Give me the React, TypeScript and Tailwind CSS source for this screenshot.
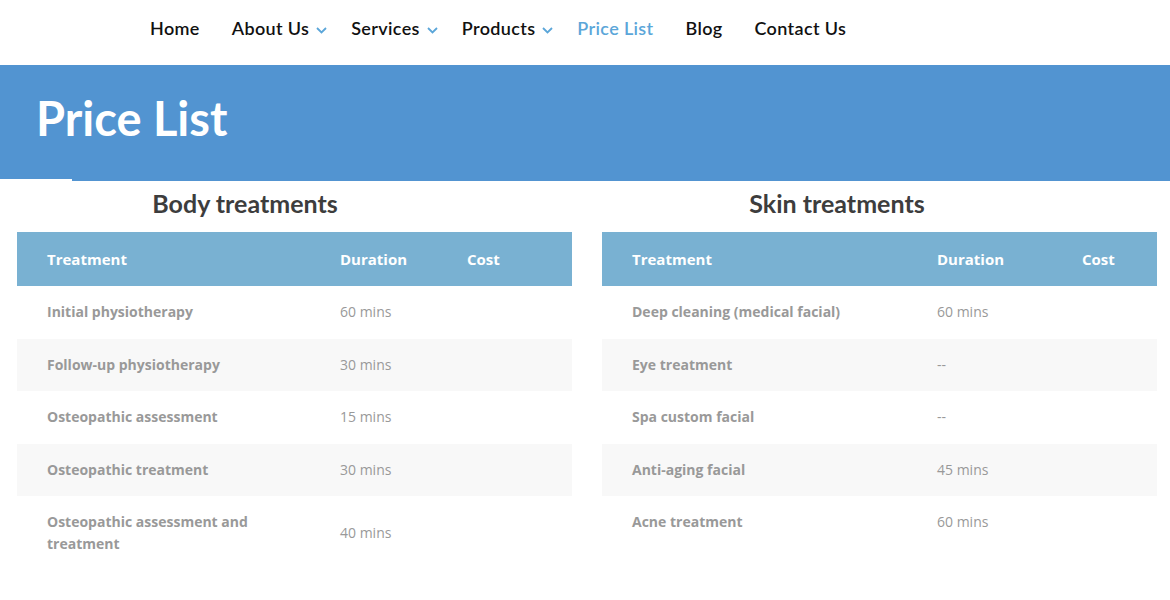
import React from "react";

type Row = { name: string; duration: string; cost?: string };

const bodyRows: Row[] = [
  { name: "Initial physiotherapy", duration: "60 mins" },
  { name: "Follow-up physiotherapy", duration: "30 mins" },
  { name: "Osteopathic assessment", duration: "15 mins" },
  { name: "Osteopathic treatment", duration: "30 mins" },
  { name: "Osteopathic assessment and treatment", duration: "40 mins" },
];

const skinRows: Row[] = [
  { name: "Deep cleaning (medical facial)", duration: "60 mins" },
  { name: "Eye treatment", duration: "--" },
  { name: "Spa custom facial", duration: "--" },
  { name: "Anti-aging facial", duration: "45 mins" },
  { name: "Acne treatment", duration: "60 mins" },
];

function Chevron() {
  return (
    <svg width="11" height="7" viewBox="0 0 11 7" className="ml-[7px] mt-[4px]">
      <path d="M1 1l4.5 4.5L10 1" fill="none" stroke="#5ba6d9" strokeWidth="1.8" />
    </svg>
  );
}

function NavItem({ label, active, drop, className }: { label: string; active?: boolean; drop?: boolean; className?: string }) {
  return (
    <a className={`flex items-center ${className ?? ""}`}>
      <span className={active ? "text-[#5ba6d9]" : "text-[#111]"}>{label}</span>
      {drop && <Chevron />}
    </a>
  );
}

function PriceTable({ title, rows, cols, titlePad }: { title: string; rows: Row[]; cols: string; titlePad: string }) {
  return (
    <div className="w-[555px]">
      {/* заголовок таблицы */}
      <h2 className={`h-[51px] flex items-center justify-center pb-[6px] ${titlePad} text-[25px] font-bold text-[#3d3d3d] font-['Lato',sans-serif]`}>
        {title}
      </h2>
      <div className={`grid ${cols} h-[54px] items-center bg-[#79b1d2] text-white text-[15px] font-bold`}>
        <div className="pl-[30px]">Treatment</div>
        <div className="pl-[30px]">Duration</div>
        <div className="pl-[30px]">Cost</div>
      </div>
      {rows.map((r, i) => (
        <div
          key={r.name}
          className={`grid ${cols} items-center text-[14px] leading-[22px] text-[#999] ${i % 2 === 1 ? "bg-[#f8f8f8]" : "bg-white"}`}
        >
          <div className="pl-[30px] pr-[20px] py-[15.25px] font-bold">{r.name}</div>
          <div className="pl-[30px]">{r.duration}</div>
          <div className="pl-[30px]">{r.cost ?? ""}</div>
        </div>
      ))}
    </div>
  );
}

export default function App() {
  return (
    <div className="min-h-screen bg-white font-['Open_Sans',sans-serif]">
      {/* Навигация */}
      <nav className="h-[65px] flex items-start pt-[15px] pl-[150px] text-[18px] tracking-[0.35px] font-semibold font-['Lato',sans-serif]">
        <NavItem label="Home" />
        <NavItem label="About Us" drop className="ml-[32px]" />
        <NavItem label="Services" drop className="ml-[24px]" />
        <NavItem label="Products" drop className="ml-[24px]" />
        <NavItem label="Price List" active className="ml-[24px]" />
        <NavItem label="Blog" className="ml-[32px]" />
        <NavItem label="Contact Us" className="ml-[32px]" />
      </nav>

      {/* Баннер */}
      <div className="h-[116px] bg-[#5294d1] flex items-center pl-[36px] pb-[10px]">
        <h1 className="text-[47px] font-bold text-white font-['Lato',sans-serif] leading-none">Price List</h1>
      </div>
      <div className="h-[2px] w-[72px] -mt-[2px] bg-white" />

      <div className="flex gap-[30px] pl-[17px]">
        <PriceTable title="Body treatments" rows={bodyRows} cols="grid-cols-[293px_127px_135px]" titlePad="pr-[99px]" />
        <PriceTable title="Skin treatments" rows={skinRows} cols="grid-cols-[305px_145px_105px]" titlePad="pr-[85px]" />
      </div>
    </div>
  );
}
